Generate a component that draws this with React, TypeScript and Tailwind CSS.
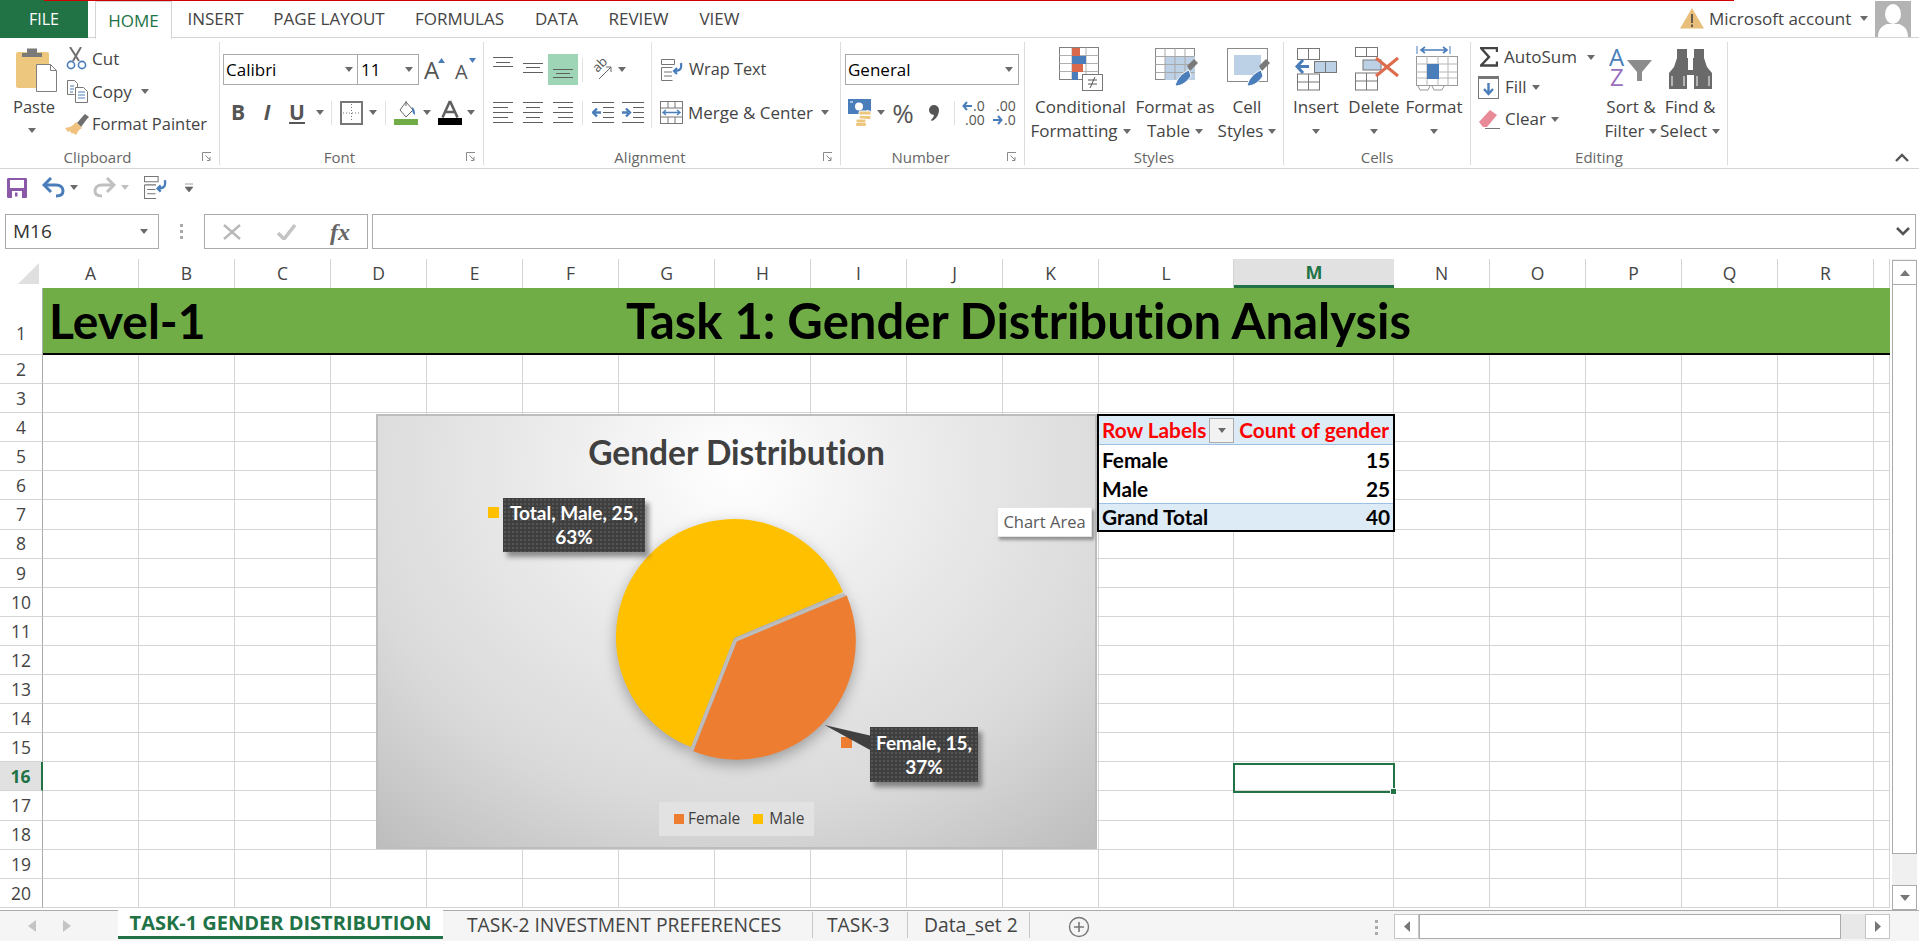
const BLUE = "#4a7ebb";

const colNames = ["A", "B", "C", "D", "E", "F", "G", "H", "I", "J", "K", "L", "M", "N", "O", "P", "Q", "R", ""];
const rowNames = Array.from({ length: 19 }, (_, i) => i + 2);

const Caret = ({ className = "" }: { className?: string }) => (
    <svg width="8" height="5" viewBox="0 0 8 5" className={`shrink-0 ${className}`}>
        <path d="M0 0h8L4 5z" fill="#6a6a6a" />
    </svg>
);

const Sep = ({ className = "" }: { className?: string }) => <div className={`w-px h-[24px] bg-[#e1e1e1] shrink-0 ${className}`} />;

const Launcher = () => (
    <svg width="10" height="10" viewBox="0 0 10 10">
        <path d="M.5 9V.5H9" fill="none" stroke="#8a8a8a" />
        <path d="M3.500 3.500 8 8M8 5v3.500H5" fill="none" stroke="#8a8a8a" />
    </svg>
);

const Group = ({ w, label, launcher, children }: { w: string; label: string; launcher?: boolean; children: React.ReactNode }) => (
    <div className={`${w} h-[123px] shrink-0 border-r border-[#dcdcdc]`}>
        <div className="h-[106px] flex">{children}</div>
        <div className="flex h-[18px] items-center text-[15px] text-[#666]">
            <span className="flex-1 text-center">{label}</span>
            {launcher && (
                <span className="w-[24px] flex justify-center">
                    <Launcher />
                </span>
            )}
        </div>
    </div>
);

const Large = ({ w, icon, lines }: { w: string; icon: React.ReactNode; lines: string[] }) => (
    <div className={`${w} flex flex-col items-center shrink-0`}>
        <div className="h-[53px] flex items-center justify-center">{icon}</div>
        <div className="h-[24px] leading-[24px] whitespace-nowrap">{lines[0]}</div>
        <div className="h-[24px] leading-[24px] whitespace-nowrap flex items-center gap-[5px]">
            {lines[1]}
            <Caret />
        </div>
    </div>
);

const AlignLines = ({ ys, short }: { ys: number[]; short: number[] }) => (
    <svg width="20" height="31" viewBox="0 0 20 31" className="shrink-0">
        {ys.map((y, i) => (
            <path key={y} d={`M${short[i]} ${y + 0.5}H${20 - short[i]}`} stroke="#5f5f5f" />
        ))}
    </svg>
);

const ParaLines = ({ mode }: { mode: "l" | "c" | "r" }) => {
    const ys = [5.5, 10.5, 15.5, 20.5, 25.5];
    return (
        <svg width="20" height="31" viewBox="0 0 20 31" className="shrink-0">
            {ys.map((y, i) => {
                const full = i % 2 === 0;
                const a = full ? 0 : mode === "l" ? 0 : mode === "c" ? 3 : 5;
                const b = full ? 20 : mode === "l" ? 15 : mode === "c" ? 17 : 20;
                return <path key={y} d={`M${a} ${y}H${b}`} stroke="#5f5f5f" />;
            })}
        </svg>
    );
};

const Indent = ({ inc }: { inc?: boolean }) => (
    <svg width="22" height="31" viewBox="0 0 22 31" className="shrink-0">
        {[5.5, 10.5, 15.5, 20.5, 25.5].map((y, i) => (
            <path key={y} d={`M${i === 0 || i === 4 ? 0 : 11} ${y}H22`} stroke="#5f5f5f" />
        ))}
        <path d={inc ? "M0 15.500h6M4 11.500l4 4-4 4" : "M9 15.500H2M5 11.500l-4 4 4 4"} fill="none" stroke={BLUE} strokeWidth="2.400" />
    </svg>
);

const PasteIcon = () => (
    <svg width="41" height="45" viewBox="0 0 41 45">
        <rect x="0" y="5" width="33" height="36" rx="2" fill="#eec77e" />
        <path d="M6 10V6h5V1.500h10V6h5v4z" fill="#7a7a7a" />
        <path d="M20.500 17.500h14l6 6v21h-20z" fill="#fff" stroke="#7f7f7f" />
        <path d="M34.500 17.500v6h6" fill="none" stroke="#7f7f7f" />
    </svg>
);

const CutIcon = () => (
    <svg width="21" height="23" viewBox="0 0 21 23">
        <path d="M4 0l9 14M15 0 7 14" stroke="#6f6f6f" strokeWidth="2" fill="none" />
        <circle cx="5" cy="18" r="3.600" fill="none" stroke={BLUE} strokeWidth="1.600" />
        <circle cx="16" cy="18" r="3.600" fill="none" stroke={BLUE} strokeWidth="1.600" />
    </svg>
);

const CopyIcon = () => (
    <svg width="21" height="23" viewBox="0 0 21 23">
        <path d="M.5.5h7l3 3v5M.5.5v14h7" fill="none" stroke="#777" />
        <path d="M3 6h4M3 9h4M3 12h3" stroke={BLUE} />
        <path d="M8.500 7.500h8l4 4v11h-12z" fill="#fff" stroke="#777" />
        <path d="M11 12h7M11 15h7M11 18h7" stroke={BLUE} />
    </svg>
);

const PainterIcon = () => (
    <svg width="24" height="21" viewBox="0 0 24 21">
        <path d="M12 9l6-7 2-2 4 3-2 2-6 8z" fill="#6f6f6f" />
        <path d="M11 8l6 6-3 2-3 5-3-2-1 1-2-3-2 1-3-4 5-1 3-2z" fill="#f0c27e" />
    </svg>
);

const GrowA = ({ grow }: { grow?: boolean }) => (
    <div className="relative w-[20px] h-[24px] shrink-0">
        <span className={`absolute left-0 bottom-0 text-[#555] leading-none ${grow ? "text-[24px]" : "text-[20px]"}`}>A</span>
        <svg width="7" height="5" viewBox="0 0 7 5" className="absolute right-[-1px] top-0">
            <path d={grow ? "M0 5h7L3.500 0z" : "M0 0h7L3.500 5z"} fill={BLUE} />
        </svg>
    </div>
);

const BorderIcon = () => (
    <svg width="23" height="24" viewBox="0 0 23 24" className="shrink-0">
        <rect x="1" y="1" width="21" height="22" fill="none" stroke="#777" strokeWidth="2" />
        <path d="M11.500 3v18M3 12h17" stroke="#777" strokeDasharray="1 2" />
    </svg>
);

const FillIcon = () => (
    <svg width="24" height="25" viewBox="0 0 24 25" className="shrink-0">
        <path d="M12 2l7 8-7 7-6-7z" fill="#fff" stroke="#666" />
        <path d="M12 6V1" stroke="#666" />
        <path d="M18 7c3 2 3 5 3 8-2-1-3-3-3-8z" fill={BLUE} />
        <rect x="0" y="19" width="24" height="6" fill="#70ad47" />
    </svg>
);

const FontColorIcon = () => (
    <svg width="24" height="25" viewBox="0 0 24 25" className="shrink-0">
        <path d="M12 1 4.500 17.500M12 1l7.500 16.500M7.500 12h9" fill="none" stroke="#5f5f5f" strokeWidth="2.600" />
        <rect x="0" y="18" width="24" height="7" fill="#000" />
    </svg>
);

const OrientIcon = () => (
    <div className="relative w-[19px] h-[24px] shrink-0">
        <span className="absolute left-[-1px] top-[0px] text-[13px] leading-none text-[#555] -rotate-[45deg] origin-center">ab</span>
        <svg width="19" height="24" viewBox="0 0 19 24" className="absolute left-0 top-0">
            <path d="M6 21 18 9M18 9v5M18 9h-5" fill="none" stroke="#666" />
        </svg>
    </div>
);

const WrapIcon = ({ size = 22 }: { size?: number }) => (
    <svg width={size} height={size} viewBox="0 0 22 22" className="shrink-0">
        <path d="M.5.5h13v5H.5zM.5 8.500h11M.5 8.500v13h11M3 13h8M3 17h8" fill="none" stroke="#777" />
        <path d="M20 4c1 6-1 8-7 8M16 9l-3 3 3 3" fill="none" stroke={BLUE} strokeWidth="2.200" />
    </svg>
);

const MergeIcon = () => (
    <svg width="23" height="23" viewBox="0 0 23 23" className="shrink-0">
        <rect x=".5" y=".5" width="22" height="22" fill="#fff" stroke="#777" />
        <path d="M.5 7h22M.5 16h22M8 .5V7M15 .5V7M8 16v6.500M15 16v6.500" stroke="#777" />
        <path d="M3 11.500h17M6 9l-3 2.500L6 14M17 9l3 2.500L17 14" fill="none" stroke={BLUE} strokeWidth="1.400" />
    </svg>
);

const MoneyIcon = () => (
    <svg width="24" height="27" viewBox="0 0 24 27" className="shrink-0">
        <rect x="0" y="0" width="23" height="15" fill={BLUE} />
        <circle cx="11" cy="7.500" r="4" fill="#fff" />
        <path d="M2 3h3M18 12h3" stroke="#fff" />
        <rect x="11" y="12" width="12" height="4" rx="1.500" fill="#eec77e" stroke="#fff" />
        <rect x="11" y="16.500" width="12" height="4" rx="1.500" fill="#eec77e" stroke="#fff" />
        <rect x="8" y="20" width="10" height="3.500" rx="1.500" fill="#eec77e" stroke="#fff" />
        <rect x="8" y="23.500" width="10" height="3.500" rx="1.500" fill="#eec77e" />
    </svg>
);

const DecArrow = ({ right }: { right?: boolean }) => (
    <svg width="10" height="10" viewBox="0 0 10 10" className="shrink-0">
        <path d={right ? "M0 5h8M5 1l3.500 4L5 9" : "M10 5H2M5 1 1.500 5 5 9"} fill="none" stroke={BLUE} strokeWidth="2" />
    </svg>
);

const DecIcon = ({ inc }: { inc?: boolean }) => (
    <div className="w-[24px] flex flex-col text-[14px] leading-[14px] text-[#555] shrink-0">
        {inc ? (
            <>
                <div className="flex items-center gap-[1px]">
                    <DecArrow />
                    <span>.0</span>
                </div>
                <div className="pl-[3px]">.00</div>
            </>
        ) : (
            <>
                <div className="pl-[3px]">.00</div>
                <div className="flex items-center gap-[1px]">
                    <DecArrow right />
                    <span>.0</span>
                </div>
            </>
        )}
    </div>
);

const CondIcon = () => (
    <svg width="44" height="44" viewBox="0 0 44 44">
        <rect x=".5" y=".5" width="39" height="32" fill="#fff" stroke="#808080" />
        <path d="M.5 8.500h39M.5 16.500h39M.5 24.500h39M13 .5v32M27 .5v32" stroke="#b0b0b0" />
        <rect x="13" y="1" width="8" height="8" fill="#d9694a" />
        <rect x="13" y="9" width="14" height="8" fill={BLUE} />
        <rect x="13" y="17" width="11" height="8" fill="#d9694a" />
        <rect x="13" y="25" width="6" height="8" fill={BLUE} />
        <rect x="23.500" y="27.500" width="20" height="16" fill="#fff" stroke="#777" />
        <path d="M29 33h9M29 37h9M31 41l5-11" stroke="#555" />
    </svg>
);

const BrushTip = () => (
    <>
        <path d="M32 18l7-7 4 4-8 8z" fill="#7a7a7a" />
        <path d="M20 38c2-8 7-13 14-16l2 6c-4 6-9 10-16 10z" fill={BLUE} stroke="#fff" />
    </>
);

const TableIcon = () => (
    <svg width="45" height="42" viewBox="0 0 45 42" className="ml-[4px]">
        <rect x=".5" y=".5" width="39" height="31" fill="#fff" stroke="#8a8a8a" />
        <rect x="10" y="8" width="30" height="24" fill="#bcd0e6" />
        <path d="M.5 8.500h39M.5 16.500h39M.5 24.500h39M10 .5v31M20 .5v31M30 .5v31" stroke="#a8a8a8" />
        <BrushTip />
    </svg>
);

const CellStyleIcon = () => (
    <svg width="44" height="42" viewBox="0 0 44 42" className="ml-[4px]">
        <rect x=".5" y=".5" width="40" height="33" fill="#fff" stroke="#8a8a8a" />
        <rect x="7" y="7" width="27" height="20" fill="#bcd0e6" />
        <BrushTip />
    </svg>
);

const CellBox = ({ x, y, w = 22, h = 11, fill = "#fff" }: { x: number; y: number; w?: number; h?: number; fill?: string }) => (
    <>
        <rect x={x + 0.5} y={y + 0.5} width={w} height={h} fill={fill} stroke="#777" />
        <path d={`M${x + w / 2 + 0.5} ${y}v${h}`} stroke="#777" />
    </>
);

const InsertIcon = () => (
    <svg width="44" height="44" viewBox="0 0 44 44">
        <CellBox x={3} y={1} />
        <CellBox x={20} y={14} fill="#bcd0e6" />
        <path d="M15 19.500H3M9 13l-6 6.500 6 6.500" fill="none" stroke={BLUE} strokeWidth="3" />
        <rect x="3.500" y="27" width="22" height="16" fill="#fff" stroke="#777" />
        <path d="M14.500 27v16M3.500 35h22" stroke="#777" />
    </svg>
);

const DeleteIcon = () => (
    <svg width="44" height="44" viewBox="0 0 44 44" className="ml-[5px]">
        <CellBox x={0} y={0} h={9} />
        <rect x="8" y="13" width="18" height="10" fill="#bcd0e6" stroke="#777" />
        <rect x=".5" y="26" width="22" height="17" fill="#fff" stroke="#777" />
        <path d="M11.500 26v17M.5 34h22" stroke="#777" />
        <path d="M21 11 43 29M43 11 21 29" stroke="#dd6b4d" strokeWidth="3" fill="none" />
    </svg>
);

const FormatIcon = () => (
    <svg width="42" height="45" viewBox="0 0 42 45" className="ml-[6px]">
        <path d="M1 0v8M34 0v8" stroke={BLUE} />
        <path d="M5 4h26M9 1 5 4l4 3M27 1l4 3-4 3" fill="none" stroke={BLUE} strokeWidth="1.600" />
        <rect x=".5" y="10.500" width="41" height="29" fill="#fff" stroke="#999" />
        <path d="M.5 18h41M.5 26h41M.5 32h41M11 10v30M22 10v30M32 10v30" stroke="#b5b5b5" />
        <rect x="11" y="18" width="12" height="15" fill={BLUE} />
        <path d="M2 40l2 4h8l2-4M16 40l2 4h8l2-4" fill="none" stroke="#999" />
    </svg>
);

const SigmaIcon = () => (
    <svg width="18" height="20" viewBox="0 0 18 20" className="shrink-0">
        <path d="M17 5V1H1l8 9-8 8.500h16v-4" fill="none" stroke="#444" strokeWidth="2.400" />
    </svg>
);

const FillDownIcon = () => (
    <svg width="22" height="23" viewBox="0 0 22 23" className="shrink-0">
        <rect x=".5" y=".5" width="20" height="22" fill="#fff" stroke="#777" />
        <rect x="0" y="0" width="21" height="3" fill="#777" />
        <path d="M10.500 7v11M6 13l4.500 5 4.500-5" fill="none" stroke={BLUE} strokeWidth="2.400" />
    </svg>
);

const EraserIcon = () => (
    <svg width="22" height="20" viewBox="0 0 22 20" className="shrink-0">
        <path d="M1 13 12 1l7 5L9 18H5z" fill="#e88a98" />
        <path d="M7 19.500h15" stroke="#777" />
    </svg>
);

const SortIcon = () => (
    <div className="relative w-[44px] h-[40px]">
        <span className="absolute left-0 top-[-5px] text-[24px] leading-[26px] text-[#4a7ebb]">A</span>
        <span className="absolute left-[1px] top-[15px] text-[24px] leading-[26px] text-[#9a6fbd]">Z</span>
        <svg width="26" height="24" viewBox="0 0 26 24" className="absolute right-0 top-[10px]">
            <path d="M0 1h25L15 13v9h-5V13z" fill="#8c8c8c" />
        </svg>
    </div>
);

const BinocularsIcon = () => (
    <svg width="43" height="40" viewBox="0 0 43 40">
        <path d="M8 0h10v9h1v12h5V9h1V0h10v9l3 9 5 6v16H25V26h-7v14H0V24l5-6 3-9z" fill="#6a6a6a" />
        <path d="M3 27v10M15 27v10M28 27v10M40 27v10" stroke="#fff" />
    </svg>
);

const SaveIcon = () => (
    <svg width="20" height="20" viewBox="0 0 20 20">
        <path d="M0 1.500C0 .5.5 0 1.500 0H18.500C19.500 0 20 .5 20 1.500V18.500C20 19.500 19.500 20 18.500 20H1.500C.5 20 0 19.500 0 18.500z" fill="#8a5aa9" />
        <rect x="3" y="2" width="14" height="8" fill="#fff" />
        <rect x="5" y="13" width="10" height="7" fill="#fff" />
        <rect x="8" y="14.500" width="2.500" height="4" fill="#8a5aa9" />
    </svg>
);

const UndoIcon = ({ color, flip }: { color: string; flip?: boolean }) => (
    <svg width="23" height="21" viewBox="0 0 23 21" className={flip ? "-scale-x-100" : ""}>
        <path d="M2 8h12c5 0 7 3 7 6s-2 5-7 5" fill="none" stroke={color} strokeWidth="3" />
        <path d="M9 1 2 8l7 7" fill="none" stroke={color} strokeWidth="3" />
    </svg>
);

const SheetTab = ({ w, label }: { w: string; label: string }) => (
    <div className={`${w} h-[26px] flex items-center text-[19.300px] text-[#444] whitespace-nowrap border-r border-[#c8c8c8]`}>{label}</div>
);

const PieChart = () => (
    <div className="absolute left-[376px] top-[155px] w-[721px] h-[435px] border-2 border-[#bdbdbd] bg-[radial-gradient(ellipse_80%_115%_at_50%_12%,#ffffff_0%,#ececec_32%,#dadada_68%,#bcbcbc_100%)] [font-family:'Open_Sans',sans-serif]">
        <div className="pt-[16px] text-center text-[33.500px] leading-[40px] font-bold text-[#404040] [font-family:Lato,sans-serif] [font-variant-ligatures:none]">Gender Distribution</div>

        <svg width="721" height="435" viewBox="0 0 721 435" className="absolute left-[-2px] top-[-2px]">
            <g className="drop-shadow-[0_5px_7px_rgba(0,0,0,0.3)]">
                <path d="M358 224 467 178A118 118 0 1 0 315 333Z" fill="#ffc000" />
                <path d="M361 227 470.600 181.300A118.500 118.500 0 0 1 317.400 337.200Z" fill="#ed7d31" />
            </g>
            <path d="M360 226 469 180.500M359.500 226 316 335" stroke="#bdbdbd" strokeWidth="3" fill="none" />
            <rect x="112" y="93" width="11" height="11" fill="#ffc000" />
            <rect x="465" y="323" width="11" height="11" fill="#ed7d31" />
            <path d="M448.500 311 496 322V337Z" fill="#404040" />
        </svg>

        <div className="absolute left-[125px] top-[82px] w-[142px] h-[54px] flex items-center justify-center text-center text-[19px] leading-[24px] font-bold text-white bg-[#3f3f3f] bg-[radial-gradient(#555555_1px,transparent_1px)] bg-[length:4px_4px] shadow-[4px_5px_5px_rgba(0,0,0,0.4)] [font-family:Lato,sans-serif]">
            Total, Male, 25,
            <br />
            63%
        </div>
        <div className="absolute left-[492px] top-[311px] w-[108px] h-[55px] flex items-center justify-center text-center text-[19px] leading-[24px] font-bold text-white bg-[#3f3f3f] bg-[radial-gradient(#555555_1px,transparent_1px)] bg-[length:4px_4px] shadow-[4px_5px_5px_rgba(0,0,0,0.4)] [font-family:Lato,sans-serif]">
            Female, 15,
            <br />
            37%
        </div>

        <div className="absolute left-[281px] top-[386px] w-[155px] h-[34px] bg-[#e2e2e2] flex items-center pl-[15px] text-[15.500px] text-[#404040]">
            <span className="w-[10px] h-[10px] bg-[#ed7d31]" />
            <span className="ml-[4px]">Female</span>
            <span className="ml-[13px] w-[10px] h-[10px] bg-[#ffc000]" />
            <span className="ml-[6px]">Male</span>
        </div>

        <div className="absolute left-[619px] top-[91px] w-[95px] h-[30px] bg-white border border-[#e4e4e4] shadow-[2px_3px_3px_rgba(0,0,0,0.35)] flex items-center justify-center text-[16.500px] text-[#5a5a5a] whitespace-nowrap">
            Chart Area
        </div>
    </div>
);

const PivotTable = () => (
    <div className="absolute left-[1097px] top-[155px] w-[298px] h-[118px] border-2 border-black bg-white text-[20.800px] font-bold text-black [font-family:Lato,sans-serif] [font-variant-ligatures:none]">
        <div className="h-[29px] flex items-center bg-[#ddebf7] text-[#ff0000] border-b border-[#9bc2e6] pl-[3px]">
            <span className="w-[107px] whitespace-nowrap">Row Labels</span>
            <span className="w-[25px] h-[25px] bg-[#f2f2f2] border border-[#ababab] flex items-center justify-center">
                <Caret />
            </span>
            <span className="ml-auto pr-[4px] whitespace-nowrap">Count of gender</span>
        </div>
        <div className="h-[29px] flex items-center justify-between px-[3px]">
            <span>Female</span>
            <span>15</span>
        </div>
        <div className="h-[29px] flex items-center justify-between px-[3px]">
            <span>Male</span>
            <span>25</span>
        </div>
        <div className="h-[27px] flex items-center justify-between px-[3px] bg-[#ddebf7] border-t border-[#9bc2e6]">
            <span>Grand Total</span>
            <span>40</span>
        </div>
    </div>
);

const Sheet = () => (
    <div className="relative w-[1890px] grid grid-cols-[43px_repeat(11,96px)_135px_160px_repeat(5,96px)_16px] grid-rows-[29px_67px_repeat(19,29.1px)] text-[17.500px] text-[#444]">
        <div className="relative">
            <svg width="22" height="22" viewBox="0 0 22 22" className="absolute left-[18px] top-[4px]">
                <path d="M21 0v21H0z" fill="#dfdfdf" />
            </svg>
        </div>
        {colNames.map((c, i) =>
            c === "M" ? (
                <div key={i} className="flex items-center justify-center bg-[#e1e1e1] border-b-[3px] border-[#217346] font-bold text-[18px] text-[#217346]">
                    {c}
                </div>
            ) : (
                <div key={i} className="flex items-center justify-center border-r border-[#d4d4d4]">
                    {c}
                </div>
            ),
        )}

        <div className="flex items-end justify-center pb-[8px] border-b border-r border-b-[#d4d4d4] border-r-[#ababab]">1</div>
        <div className="col-[2/-1] flex items-center bg-[#70ad47] border-b-2 border-black text-black font-bold text-[49px] [font-family:Lato,sans-serif] [font-variant-ligatures:none]">
            <span className="w-[104px] pl-[6px] whitespace-nowrap text-[48px]">Level-1</span>
            <span className="flex-1 text-center whitespace-nowrap">Task 1: Gender Distribution Analysis</span>
        </div>

        {rowNames.map((r) => (
            <div key={r} className="contents">
                {r === 16 ? (
                    <div className="flex items-center justify-center bg-[#e1e1e1] border-r-[2px] border-b border-b-[#d4d4d4] border-r-[#217346] font-bold text-[#217346]">{r}</div>
                ) : (
                    <div className="flex items-center justify-center border-b border-r border-b-[#d4d4d4] border-r-[#ababab]">{r}</div>
                )}
                {colNames.map((_, i) => (
                    <div key={i} className="border-r border-b border-[#d4d4d4]" />
                ))}
            </div>
        ))}

        <PieChart />
        <PivotTable />

        <div className="absolute left-[1233px] top-[504px] w-[162px] h-[30px] border-2 border-[#217346]">
            <div className="absolute right-[-4px] bottom-[-4px] w-[7px] h-[7px] bg-[#217346] border border-white" />
        </div>
    </div>
);

export default function App() {
    return (
        <div className="relative w-[1919px] h-[941px] overflow-hidden bg-white flex flex-col text-[17px] text-[#444] [font-family:'Open_Sans',sans-serif]">
            <div className="absolute left-[44px] top-0 w-[1690px] h-px bg-[#d00000]" />

            {/* tab strip */}
            <div className="h-[38px] shrink-0 flex border-b border-[#d4d4d4]">
                <div className="w-[88px] h-[38px] bg-[#217346] text-[16px] text-white flex items-center justify-center">FILE</div>
                <div className="ml-[7px] w-[77px] h-[38px] mt-px bg-white border border-b-0 border-[#d4d4d4] text-[#217346] flex items-center justify-center">HOME</div>
                <div className="w-[87px] flex items-center justify-center">INSERT</div>
                <div className="w-[140px] flex items-center justify-center">PAGE LAYOUT</div>
                <div className="w-[121px] flex items-center justify-center">FORMULAS</div>
                <div className="w-[73px] flex items-center justify-center">DATA</div>
                <div className="w-[91px] flex items-center justify-center">REVIEW</div>
                <div className="w-[71px] flex items-center justify-center">VIEW</div>
                <div className="ml-auto flex items-center pr-[8px]">
                    <svg width="24" height="21" viewBox="0 0 24 21">
                        <path d="M12 0 24 20.500H0z" fill="#e8bf7a" />
                        <path d="M12 6v9M12 16.500v2.500" stroke="#444" strokeWidth="1.600" />
                    </svg>
                    <span className="ml-[5px] w-[145px] whitespace-nowrap">Microsoft account</span>
                    <Caret className="ml-[6px]" />
                    <svg width="36" height="36" viewBox="0 0 36 36" className="ml-[7px]">
                        <rect width="36" height="36" fill="#b3b3b3" />
                        <ellipse cx="18" cy="13" rx="8" ry="10" fill="#fff" />
                        <path d="M3 36c0-8 4-11 9-13h12c5 2 9 5 9 13z" fill="#fff" />
                    </svg>
                </div>
            </div>

            {/* ribbon */}
            <div className="relative h-[131px] shrink-0 flex pt-[4px] border-b border-[#d4d4d4]">
                <Group w="w-[220px]" label="Clipboard" launcher>
                    <div className="w-[65px] pl-[13px] shrink-0 flex flex-col">
                        <div className="pt-[5px] pl-[3px]">
                            <PasteIcon />
                        </div>
                        <div className="mt-[3px] leading-[24px] text-[16.500px]">Paste</div>
                        <Caret className="mt-[9px] ml-[15px]" />
                    </div>
                    <div className="flex flex-col">
                        <div className="h-[33px] flex items-center">
                            <span className="w-[27px] pl-[1px]"><CutIcon /></span>
                            Cut
                        </div>
                        <div className="h-[33px] flex items-center">
                            <span className="w-[27px] pl-[2px]"><CopyIcon /></span>
                            Copy
                            <Caret className="ml-[9px]" />
                        </div>
                        <div className="h-[33px] flex items-center whitespace-nowrap text-[16.500px]">
                            <span className="w-[27px]"><PainterIcon /></span>
                            Format Painter
                        </div>
                    </div>
                </Group>

                <Group w="w-[264px]" label="Font" launcher>
                    <div className="pt-[12px] flex flex-col gap-[12px]">
                        <div className="h-[31px] flex items-center">
                            <div className="ml-[3px] w-[135px] h-[31px] border border-[#ababab] flex items-center pl-[2px] text-black">
                                Calibri
                                <Caret className="ml-auto mr-[4px]" />
                            </div>
                            <div className="w-[61px] h-[31px] border border-l-0 border-[#ababab] flex items-center pl-[3px] text-black">
                                11
                                <Caret className="ml-auto mr-[5px]" />
                            </div>
                            <div className="ml-[5px]"><GrowA grow /></div>
                            <div className="ml-[11px]"><GrowA /></div>
                        </div>
                        <div className="h-[31px] flex items-center">
                            <span className="ml-[6px] w-[24px] text-center font-bold text-[21px] text-[#555]">B</span>
                            <span className="ml-[5px] w-[24px] text-center italic font-bold text-[21px] text-[#555]">I</span>
                            <span className="ml-[6px] w-[24px] text-center underline font-bold text-[21px] leading-none text-[#555]">U</span>
                            <Caret className="ml-[7px]" />
                            <Sep className="ml-[7px] mr-[8px]" />
                            <BorderIcon />
                            <Caret className="ml-[6px]" />
                            <Sep className="ml-[8px] mr-[8px]" />
                            <FillIcon />
                            <Caret className="ml-[5px] mr-[7px]" />
                            <FontColorIcon />
                            <Caret className="ml-[5px]" />
                        </div>
                    </div>
                </Group>

                <Group w="w-[357px]" label="Alignment" launcher>
                    <div className="w-[168px] shrink-0 pt-[12px] flex flex-col gap-[12px] border-r border-[#e1e1e1] h-[86px]">
                        <div className="h-[31px] flex items-center">
                            <div className="ml-[9px]"><AlignLines ys={[3, 8, 12]} short={[0, 3, 0]} /></div>
                            <div className="ml-[10px]"><AlignLines ys={[9, 13, 18]} short={[0, 3, 0]} /></div>
                            <div className="ml-[5px] w-[30px] h-[31px] bg-[#9fd5b7] flex justify-center"><AlignLines ys={[15, 19, 23]} short={[0, 3, 0]} /></div>
                            <Sep className="ml-[4px]" />
                            <div className="ml-[10px]"><OrientIcon /></div>
                            <Caret className="ml-[6px]" />
                        </div>
                        <div className="h-[31px] flex items-center">
                            <div className="ml-[9px]"><ParaLines mode="l" /></div>
                            <div className="ml-[10px]"><ParaLines mode="c" /></div>
                            <div className="ml-[10px]"><ParaLines mode="r" /></div>
                            <Sep className="ml-[9px]" />
                            <div className="ml-[9px]"><Indent /></div>
                            <div className="ml-[8px]"><Indent inc /></div>
                        </div>
                    </div>
                    <div className="pt-[12px] flex flex-col gap-[12px]">
                        <div className="h-[31px] flex items-center ml-[9px] whitespace-nowrap">
                            <WrapIcon />
                            <span className="ml-[6px] text-[16.300px]">Wrap Text</span>
                        </div>
                        <div className="h-[31px] flex items-center ml-[8px] whitespace-nowrap">
                            <MergeIcon />
                            <span className="ml-[5px]">Merge &amp; Center</span>
                            <Caret className="ml-[8px]" />
                        </div>
                    </div>
                </Group>

                <Group w="w-[184px]" label="Number" launcher>
                    <div className="pt-[12px] flex flex-col gap-[12px]">
                        <div className="ml-[4px] w-[174px] h-[31px] border border-[#ababab] flex items-center pl-[2px] text-black">
                            General
                            <Caret className="ml-auto mr-[5px]" />
                        </div>
                        <div className="h-[31px] flex items-center">
                            <div className="ml-[7px]"><MoneyIcon /></div>
                            <Caret className="ml-[5px]" />
                            <span className="ml-[6px] w-[24px] text-[26px] leading-none text-center text-[#555]">%</span>
                            <svg width="10" height="16" viewBox="0 0 10 16" className="ml-[14px] shrink-0">
                                <path d="M5 0a5 5 0 0 1 5 5c0 5-3 9-7 11l-1-1c2-2 3-4 3-5A5 5 0 0 1 5 0z" fill="#555" />
                            </svg>
                            <Sep className="ml-[15px]" />
                            <div className="ml-[7px]"><DecIcon inc /></div>
                            <div className="ml-[7px]"><DecIcon /></div>
                        </div>
                    </div>
                </Group>

                <Group w="w-[259px]" label="Styles">
                    <div className="pl-[5px] flex">
                        <Large w="w-[101px]" icon={<CondIcon />} lines={["Conditional", "Formatting"]} />
                        <Large w="w-[88px]" icon={<TableIcon />} lines={["Format as", "Table"]} />
                        <Large w="w-[56px]" icon={<CellStyleIcon />} lines={["Cell", "Styles"]} />
                    </div>
                </Group>

                <Group w="w-[187px]" label="Cells">
                    <div className="pl-[7px] flex">
                        <Large w="w-[50px]" icon={<InsertIcon />} lines={["Insert", ""]} />
                        <Large w="w-[66px]" icon={<DeleteIcon />} lines={["Delete", ""]} />
                        <Large w="w-[54px]" icon={<FormatIcon />} lines={["Format", ""]} />
                    </div>
                </Group>

                <Group w="w-[257px]" label="Editing">
                    <div className="pl-[7px] flex">
                        <div className="w-[123px] flex flex-col">
                            <div className="h-[30px] flex items-center pl-[2px] whitespace-nowrap">
                                <SigmaIcon />
                                <span className="ml-[6px]">AutoSum</span>
                                <Caret className="ml-[10px]" />
                            </div>
                            <div className="h-[30px] flex items-center">
                                <FillDownIcon />
                                <span className="ml-[5px]">Fill</span>
                                <Caret className="ml-[5px]" />
                            </div>
                            <div className="h-[34px] flex items-center">
                                <EraserIcon />
                                <span className="ml-[5px]">Clear</span>
                                <Caret className="ml-[5px]" />
                            </div>
                        </div>
                        <Large w="w-[60px]" icon={<SortIcon />} lines={["Sort &", "Filter"]} />
                        <Large w="w-[58px]" icon={<BinocularsIcon />} lines={["Find &", "Select"]} />
                    </div>
                </Group>

                <svg width="16" height="10" viewBox="0 0 16 10" className="absolute left-[1894px] top-[114px]">
                    <path d="M2 9l6-6 6 6" fill="none" stroke="#555" strokeWidth="2.400" />
                </svg>
            </div>

            {/* quick access */}
            <div className="h-[45px] shrink-0 flex items-center pb-[8px]">
                <div className="ml-[7px]"><SaveIcon /></div>
                <div className="ml-[15px]"><UndoIcon color={BLUE} /></div>
                <Caret className="ml-[5px]" />
                <div className="ml-[15px]"><UndoIcon color="#c0c0c0" flip /></div>
                <svg width="8" height="5" viewBox="0 0 8 5" className="ml-[5px]">
                    <path d="M0 0h8L4 5z" fill="#c0c0c0" />
                </svg>
                <div className="ml-[15px]"><WrapIcon size={23} /></div>
                <svg width="8" height="9" viewBox="0 0 8 9" className="ml-[18px]">
                    <path d="M0 1h8M0 4h8L4 9z" fill="#666" stroke="#666" strokeWidth=".6" />
                </svg>
            </div>

            {/* formula bar */}
            <div className="h-[35px] shrink-0 flex">
                <div className="ml-[5px] w-[154px] h-[35px] border border-[#ababab] flex items-center pl-[7px] text-[19px] text-[#333]">
                    M16
                    <Caret className="ml-auto mr-[10px]" />
                </div>
                <div className="w-[45px] flex flex-col items-center justify-center gap-[3px]">
                    <span className="w-[3px] h-[3px] bg-[#aaa]" />
                    <span className="w-[3px] h-[3px] bg-[#aaa]" />
                    <span className="w-[3px] h-[3px] bg-[#aaa]" />
                </div>
                <div className="w-[164px] h-[35px] border border-[#ababab] flex items-center">
                    <svg width="18" height="16" viewBox="0 0 18 16" className="ml-[18px] shrink-0">
                        <path d="M1 1l16 14M17 1 1 15" stroke="#b9b9b9" strokeWidth="2.400" />
                    </svg>
                    <svg width="19" height="16" viewBox="0 0 19 16" className="ml-[36px] shrink-0">
                        <path d="M1 9l6 6L18 1" fill="none" stroke="#c4c4c4" strokeWidth="3.500" />
                    </svg>
                    <span className="ml-[34px] italic font-bold text-[24px] text-[#666] [font-family:'Liberation_Serif',serif]">fx</span>
                </div>
                <div className="ml-[4px] w-[1544px] h-[35px] border border-[#ababab] flex items-center justify-end pr-[5px]">
                    <svg width="14" height="10" viewBox="0 0 14 10">
                        <path d="M1 1l6 6 6-6" fill="none" stroke="#555" strokeWidth="2.600" />
                    </svg>
                </div>
            </div>

            {/* sheet + vertical scroll */}
            <div className="mt-[10px] flex">
                <Sheet />
                <div className="ml-[2px] w-[25px] h-[651px] flex flex-col bg-[#f0f0f0]">
                    <div className="h-[25px] mt-px bg-white border border-[#ababab] flex items-center justify-center">
                        <svg width="10" height="6" viewBox="0 0 10 6"><path d="M0 6h10L5 0z" fill="#777" /></svg>
                    </div>
                    <div className="h-[569px] bg-white border border-t-0 border-[#ababab]" />
                    <div className="flex-1" />
                    <div className="h-[25px] bg-white border border-[#ababab] flex items-center justify-center">
                        <svg width="10" height="6" viewBox="0 0 10 6"><path d="M0 0h10L5 6z" fill="#777" /></svg>
                    </div>
                </div>
            </div>

            {/* sheet tabs */}
            <div className="flex-1 flex bg-[#f5f5f5] border-t border-[#ababab] w-[1919px] pr-[29px]">
                <div className="w-[118px] flex items-center">
                    <svg width="8" height="12" viewBox="0 0 8 12" className="ml-[28px]"><path d="M8 0v12L0 6z" fill="#c4c4c4" /></svg>
                    <svg width="8" height="12" viewBox="0 0 8 12" className="ml-[27px]"><path d="M0 0v12l8-6z" fill="#c4c4c4" /></svg>
                </div>
                <div className="w-[325px] h-[29px] -mt-px bg-white border-b-[3px] border-[#217346] flex items-center justify-center font-bold text-[20px] text-[#217346] whitespace-nowrap">
                    TASK-1 GENDER DISTRIBUTION
                </div>
                <div className="flex items-center h-[28px]">
                    <SheetTab w="w-[370px] pl-[24px]" label="TASK-2 INVESTMENT PREFERENCES" />
                    <SheetTab w="w-[95px] pl-[14px]" label="TASK-3" />
                    <SheetTab w="w-[122px] pl-[16px]" label="Data_set 2" />
                </div>
                <svg width="22" height="22" viewBox="0 0 22 22" className="ml-[38px] mt-[5px]">
                    <circle cx="11" cy="11" r="9.500" fill="none" stroke="#777" strokeWidth="1.400" />
                    <path d="M11 6v10M6 11h10" stroke="#777" strokeWidth="1.600" />
                </svg>
                <div className="ml-auto flex items-start">
                    <div className="mt-[9px] mr-[16px] flex flex-col gap-[3px]">
                        <span className="w-[3px] h-[3px] bg-[#aaa]" />
                        <span className="w-[3px] h-[3px] bg-[#aaa]" />
                        <span className="w-[3px] h-[3px] bg-[#aaa]" />
                    </div>
                    <div className="mt-[3px] w-[496px] h-[25px] flex bg-[#e8e8e8]">
                        <div className="w-[25px] bg-white border border-[#c4c4c4] flex items-center justify-center">
                            <svg width="6" height="11" viewBox="0 0 6 11"><path d="M6 0v11L0 5.500z" fill="#777" /></svg>
                        </div>
                        <div className="w-[422px] bg-white border border-[#ababab]" />
                        <div className="ml-auto w-[25px] bg-white border border-[#c4c4c4] flex items-center justify-center">
                            <svg width="6" height="11" viewBox="0 0 6 11"><path d="M0 0v11l6-5.500z" fill="#777" /></svg>
                        </div>
                    </div>
                </div>
            </div>
        </div>
    );
}
